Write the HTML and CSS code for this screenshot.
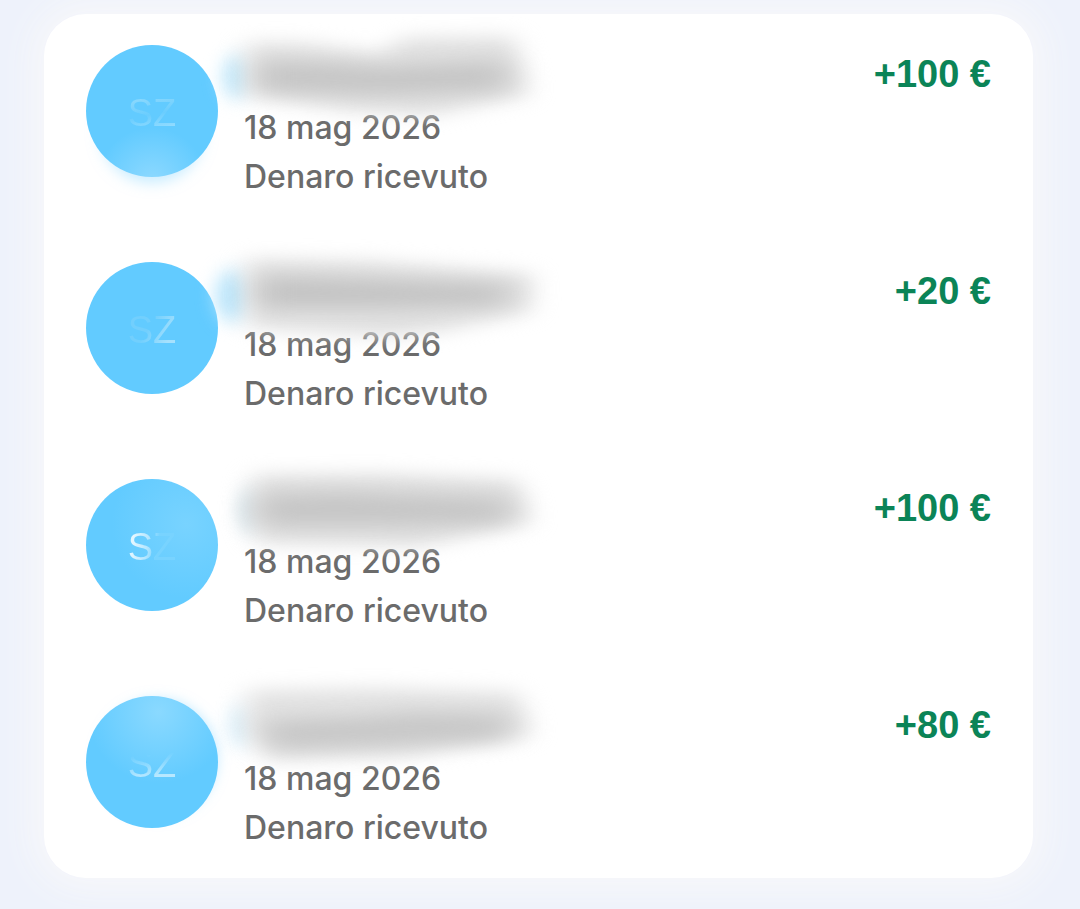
FILE: index.html
```html
<!DOCTYPE html>
<html lang="it">
<head>
    <meta charset="UTF-8">
    <meta name="viewport" content="width=device-width, initial-scale=1.0">
    <title>Movimenti</title>
    <link rel="stylesheet" href="styles.css">
</head>
<body>
    <!-- Shared blur filters for the hidden names -->
    <svg class="defs" aria-hidden="true">
        <defs>
            <filter id="blur-edge" x="-200%" y="-100%" width="500%" height="300%" color-interpolation-filters="sRGB">
                <feGaussianBlur stdDeviation="9"/>
            </filter>
            <filter id="blur-soft" x="-30%" y="-80%" width="160%" height="260%" color-interpolation-filters="sRGB">
                <feGaussianBlur stdDeviation="13 9"/>
            </filter>
            <filter id="blur-core" x="-30%" y="-200%" width="160%" height="500%" color-interpolation-filters="sRGB">
                <feGaussianBlur stdDeviation="16 9"/>
            </filter>
        </defs>
    </svg>

    <main class="page">
        <ul class="card">
            <li class="row">
                <div class="avatar avatar-one"><span class="initials">SZ</span></div>
                <div class="details">
                    <div class="name">
                        <svg class="smudge" viewBox="0 0 360 110" aria-hidden="true">
                            <ellipse cx="36" cy="52" rx="14" ry="22" fill="#c4eafc" filter="url(#blur-edge)"/>
                            <path d="M46 18 L100 18 L180 28 L205 13 L314 12 L328 70 L230 90 L150 86 L48 72 Z" fill="#e0e0e0" filter="url(#blur-soft)"/>
                            <path d="M58 36 L130 38 L180 42 L308 36 L304 66 L180 70 L58 66 Z" fill="#c6c6c6" filter="url(#blur-core)"/>
                        </svg>
                    </div>
                    <p class="line">18 mag 2026</p>
                    <p class="line">Denaro ricevuto</p>
                </div>
                <p class="amount">+100 €</p>
            </li>

            <li class="row">
                <div class="avatar avatar-two"><span class="initials">SZ</span></div>
                <div class="details">
                    <div class="name">
                        <svg class="smudge" viewBox="0 0 360 110" aria-hidden="true">
                            <ellipse cx="32" cy="54" rx="17" ry="26" fill="#bde7fc" filter="url(#blur-edge)"/>
                            <path d="M46 17 L170 19 L332 32 L330 70 L240 89 L190 94 L48 86 Z" fill="#e0e0e0" filter="url(#blur-soft)"/>
                            <path d="M58 34 L140 36 L310 42 L302 64 L190 66 L58 66 Z" fill="#c4c4c4" filter="url(#blur-core)"/>
                        </svg>
                    </div>
                    <p class="line">18 mag 2026</p>
                    <p class="line">Denaro ricevuto</p>
                </div>
                <p class="amount">+20 €</p>
            </li>

            <li class="row">
                <div class="avatar avatar-three"><span class="initials">SZ</span></div>
                <div class="details">
                    <div class="name">
                        <svg class="smudge" viewBox="0 0 360 110" aria-hidden="true">
                            <ellipse cx="50" cy="52" rx="10" ry="22" fill="#d5eaf3" filter="url(#blur-edge)"/>
                            <path d="M54 16 L180 15 L318 21 L330 64 L220 87 L58 84 L46 54 Z" fill="#dedede" filter="url(#blur-soft)"/>
                            <path d="M60 36 L140 34 L308 40 L306 64 L190 66 L62 66 Z" fill="#c6c6c6" filter="url(#blur-core)"/>
                        </svg>
                    </div>
                    <p class="line">18 mag 2026</p>
                    <p class="line">Denaro ricevuto</p>
                </div>
                <p class="amount">+100 €</p>
            </li>

            <li class="row">
                <div class="avatar avatar-four"><span class="initials">SZ</span></div>
                <div class="details">
                    <div class="name">
                        <svg class="smudge" viewBox="0 0 360 110" aria-hidden="true">
                            <ellipse cx="40" cy="50" rx="12" ry="22" fill="#def2fc" filter="url(#blur-edge)"/>
                            <path d="M48 14 L180 12 L318 16 L330 60 L210 80 L68 84 L46 52 Z" fill="#e2e2e2" filter="url(#blur-soft)"/>
                            <path d="M62 44 L170 40 L210 36 L310 38 L306 64 L190 70 L70 74 Z" fill="#c8c8c8" filter="url(#blur-core)"/>
                        </svg>
                    </div>
                    <p class="line">18 mag 2026</p>
                    <p class="line">Denaro ricevuto</p>
                </div>
                <p class="amount">+80 €</p>
            </li>
        </ul>
    </main>
</body>
</html>
```
FILE: styles.css
```css
* {
    box-sizing: border-box;
}

body {
    margin: 0;
    min-height: 100vh;
    font-family: Inter, "Liberation Sans", Arial, sans-serif;
    color: #6b6b6b;
    background: #eef2fb;
}

.defs {
    position: absolute;
    width: 0;
    height: 0;
}

.page {
    min-height: 100vh;
    padding: 14px 47px 31px 44px;
    overflow: hidden;
}

.card {
    display: flex;
    flex-direction: column;
    gap: 61px;
    margin: 0;
    padding: 31px 42px 26px;
    list-style: none;
    background: #fff;
    border-radius: 42px;
    box-shadow: 0 0 36px 10px #f8f8fa;
}

.row {
    display: flex;
    align-items: flex-start;
    gap: 26px;
}

.avatar {
    position: relative;
    display: flex;
    flex: none;
    align-items: center;
    justify-content: center;
    width: 132px;
    height: 132px;
    border-radius: 50%;
    background-color: #62cbff;
}

/* Initials are faded by a gradient that shows through the letters */
.initials {
    padding-top: 3px;
    font-family: "Liberation Sans", Arial, sans-serif;
    font-size: 38px;
    line-height: 48px;
    color: transparent;
    background-clip: text;
    -webkit-background-clip: text;
}

.avatar-one {
    background-image: radial-gradient(circle at 50% 104%, #8ed9ff 0, rgba(98, 203, 255, 0) 36%);
    box-shadow: 0 20px 14px -14px rgba(150, 220, 255, 0.5);
}

.avatar-one .initials {
    background-image: linear-gradient(170deg, #8ad8fd 25%, #6acdfe 55%, #90dbff 80%);
}

.avatar-two .initials {
    background-image: linear-gradient(120deg, #72cffd 45%, #a6e1fd 80%);
}

.avatar-three {
    background-image: radial-gradient(circle at 76% 34%, #78d3ff 0, rgba(98, 203, 255, 0) 56%);
}

.avatar-three .initials {
    background-image: linear-gradient(100deg, #e4f6ff 15%, #b4e6ff 42%, #78d3ff 60%);
}

.avatar-four {
    background-image: radial-gradient(circle at 55% 12%, #8ad9ff 0, rgba(98, 203, 255, 0) 52%);
    box-shadow: 6px -4px 12px -6px rgba(150, 220, 255, 0.5);
}

.avatar-four .initials {
    background-image: linear-gradient(175deg, rgba(255, 255, 255, 0) 35%, #b8e8ff 75%);
}

.details {
    position: relative;
    flex: 1;
}

.name {
    height: 58px;
}

.line {
    margin: 0;
    font-size: 32px;
    font-weight: 500;
    line-height: 49px;
}

/* The smudge spills over the avatar edge and the top of the date */
.smudge {
    position: absolute;
    z-index: 1;
    top: -20px;
    left: -44px;
    width: 360px;
    height: 110px;
    overflow: visible;
}

.amount {
    margin: 0;
    font-family: "Liberation Sans", Arial, sans-serif;
    font-size: 38px;
    font-weight: 600;
    line-height: 58px;
    color: #0b8457;
    white-space: nowrap;
}
```
